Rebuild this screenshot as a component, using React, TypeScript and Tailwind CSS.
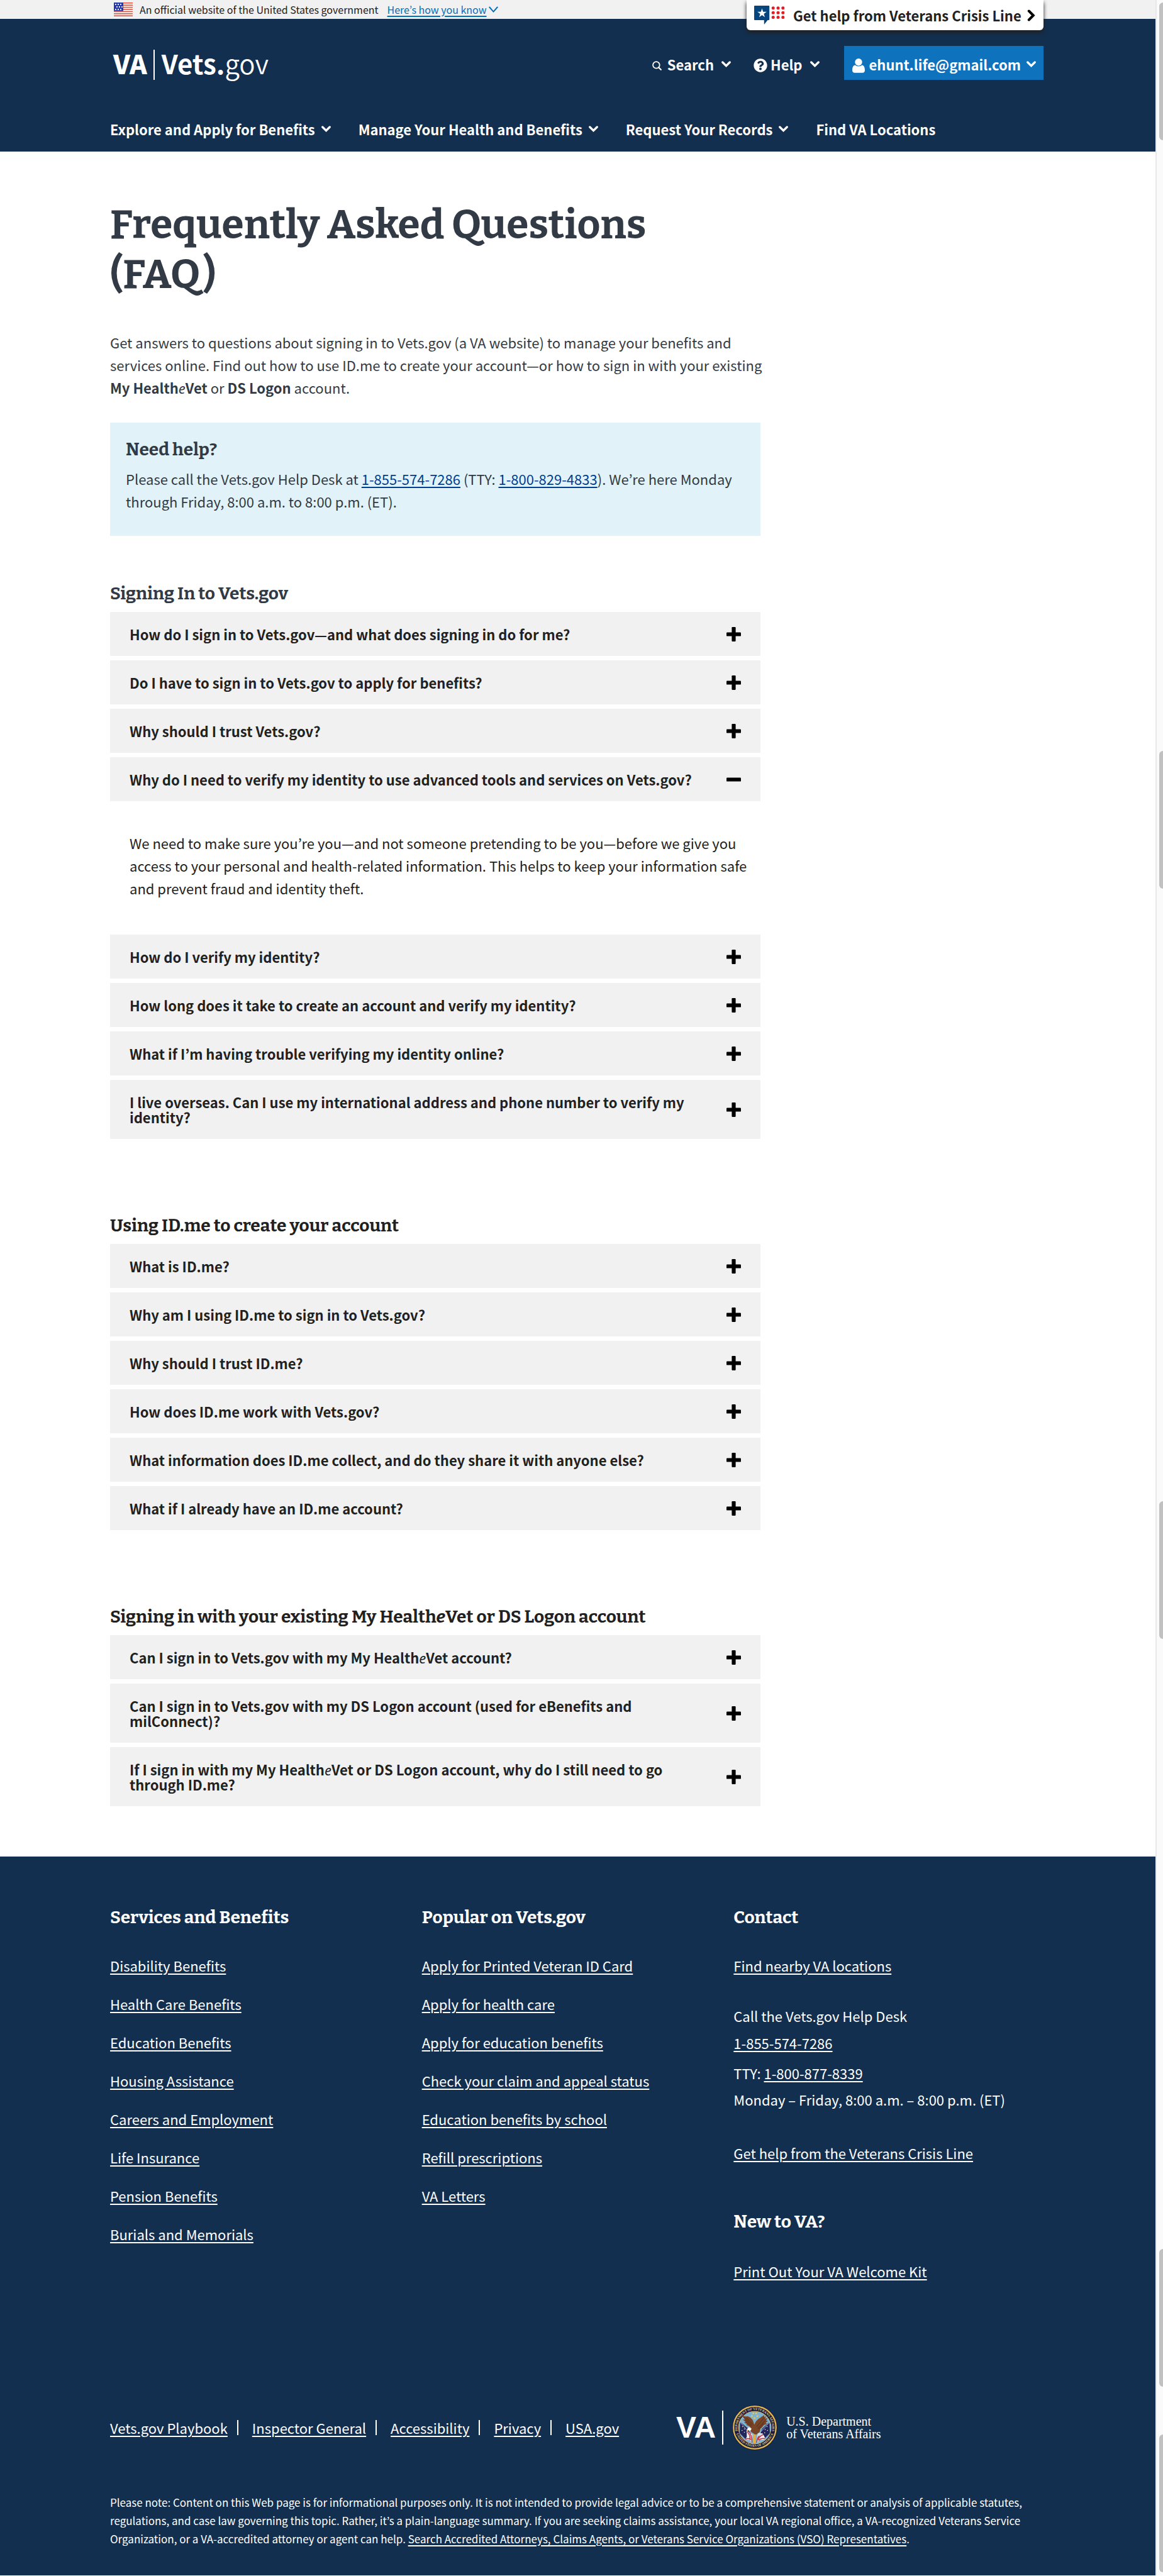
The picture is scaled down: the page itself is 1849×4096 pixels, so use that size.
import React, { useState } from "react";
import { FaQuestionCircle } from "react-icons/fa";

const SLAB = "font-['Bitter','DejaVu_Serif_Condensed',serif]";

function E({ light = false }: { light?: boolean }) {
  return <em className={light ? "font-['Noto_Sans',sans-serif] leading-4 font-normal italic" : "italic"}>e</em>;
}

function ChevronDown() {
  return (
    <svg className="h-[10px] w-[15px] shrink-0" viewBox="0 0 15 10" fill="none" stroke="currentColor" aria-hidden="true">
      <path d="M1.8 2L7.5 7.6L13.2 2" strokeWidth="3.4" strokeLinecap="round" />
    </svg>
  );
}

function PlusIcon({ open }: { open: boolean }) {
  return (
    <svg className="size-[23px] shrink-0" viewBox="0 0 23 23" fill="#000" aria-hidden="true">
      <rect x="0" y="8.4" width="23" height="6.2" rx="1.2" />
      {!open && <rect x="8.4" y="0" width="6.2" height="23" rx="1.2" />}
    </svg>
  );
}

function UsFlag() {
  const rows = [0, 2, 4, 6, 8, 10, 12];
  const stars: [number, number][] = [
    [3, 3], [7, 3], [11, 3], [5, 7], [9, 7], [13, 7], [3, 11], [7, 11], [11, 11],
  ];
  return (
    <svg className="h-[22px] w-[30px]" viewBox="0 0 30 22" aria-hidden="true">
      <rect width="30" height="22" fill="#fff" />
      {rows.map((r) => (
        <rect key={r} y={r * 1.7} width="30" height="1.6" fill="#e0503c" />
      ))}
      <rect width="15" height="13.6" fill="#2639ae" />
      {stars.map(([x, y]) => (
        <rect key={`${x}-${y}`} x={x - 1} y={y - 1} width="1.9" height="1.9" fill="#fff" />
      ))}
    </svg>
  );
}

function CrisisLogo() {
  const dots = [0, 1, 2];
  return (
    <svg className="h-[30px] w-[48px] shrink-0" viewBox="0 0 48 30" aria-hidden="true">
      <path d="M1 0H23.2a1 1 0 0 1 1 1V22a1 1 0 0 1-1 1H21.5L15.8 30V23H1a1 1 0 0 1-1-1V1A1 1 0 0 1 1 0Z" fill="#07457f" />
      <path d="M12.5 4.6L14.3 9.7H19.8L15.4 13L17 18.2L12.5 15.1L8 18.2L9.6 13L5.2 9.7H10.7Z" fill="#fff" />
      {dots.map((r) =>
        dots.map((c) => <circle key={`${r}${c}`} cx={30.2 + c * 7.8} cy={3.8 + r * 7.4} r="2.5" fill="#e31c25" />),
      )}
    </svg>
  );
}

function VaSeal() {
  const stars: [number, number][] = [[45, 18], [51, 18], [42, 23.5], [53.5, 24], [47.5, 28]];
  return (
    <svg className="size-[72px] shrink-0" viewBox="0 0 96 96" role="img" aria-label="Seal of the Department of Veterans Affairs">
      <defs>
        <path id="seal-top" d="M12.2 57A37 37 0 1 1 83.8 57" />
        <path id="seal-bottom" d="M8.5 60A41.5 41.5 0 0 0 87.5 60" />
        <clipPath id="seal-inner"><circle cx="48" cy="48" r="34" /></clipPath>
      </defs>
      <circle cx="48" cy="48" r="48" fill="#1a1c3d" />
      <circle cx="48" cy="48" r="45" fill="#191a3e" stroke="#e2b84f" strokeWidth="3" />
      <circle cx="48" cy="48" r="34.5" fill="#7fb2d0" stroke="#d3bd72" strokeWidth="1.2" />
      <g clipPath="url(#seal-inner)">
        <path d="M17 36L34 50L40 68L28 72L16 60Z" fill="#23265a" />
        <path d="M79 36L64 50L56 68L68 72L80 60Z" fill="#23265a" />
        <g fill="#fff">
          <circle cx="22" cy="46" r="1" /><circle cx="26" cy="51" r="1" /><circle cx="21" cy="54" r="1" />
          <circle cx="26" cy="58" r="1" /><circle cx="31" cy="56" r="1" /><circle cx="74" cy="46" r="1" />
          <circle cx="70" cy="52" r="1" /><circle cx="75" cy="54" r="1" /><circle cx="69" cy="59" r="1" />
        </g>
        <path d="M31 56L43 62L42 82L38 74L27 74L31 68Z" fill="#f3eeee" />
        <path d="M64 60L54 62L52 82L57 74L71 74L68 66Z" fill="#f3eeee" />
        <g stroke="#c2273a" strokeWidth="2" fill="none">
          <path d="M32 57Q38 62 38 73" /><path d="M36 57Q42 64 42 80" />
          <path d="M28 73Q35 69 40 74" /><path d="M66 63Q58 65 55 74" />
          <path d="M62 60Q54 66 52 80" /><path d="M70 72Q62 69 56 75" />
        </g>
        <path d="M16 35L38 62M80 36L56 62" stroke="#d9dce6" strokeWidth="1" />
        <path d="M44 62L50 62L49 84L45 84Z" fill="#e5b13c" />
      </g>
      <path d="M21 23Q28 25 33 24Q44 27 47 42Q50 32 60 27Q66 22 68 22L68 26L72 24L70 29L75 28L72 33L76 34L71 38L74 40L67 43Q63 49 60 50L58 58Q50 66 45 60Q39 58 38 52Q40 47 36 45L29 42L32 41L25 37L29 36L22 31L27 31Z" fill="#7a4426" />
      <path d="M26 27L42 44M30 27L44 42M27 33L40 46M68 27L52 46M70 33L54 50M67 39L56 52" stroke="#4b2817" strokeWidth="1.1" />
      <path d="M33 49Q37 46 41 50Q40 55 37 55L35 53L32 56Q31 51 33 49Z" fill="#fff" />
      <path d="M32 53L31 57L35 54Z" fill="#e9b53b" />
      <path d="M54 60Q60 57 64 62Q60 66 55 65Z" fill="#cfe0ea" />
      {stars.map(([x, y]) => (
        <path key={`${x}-${y}`} d={`M${x} ${y - 3}l.8 2h2.1l-1.7 1.3.7 2.1-1.9-1.3-1.9 1.3.7-2.1-1.7-1.3h2.1z`} fill="#f0cc4c" />
      ))}
      <text className="fill-[#e8d287] font-['Liberation_Serif',serif] text-[7px] font-bold">
        <textPath href="#seal-top" startOffset="50%" textAnchor="middle">DEPARTMENT OF VETERANS AFFAIRS</textPath>
      </text>
      <text className="fill-[#e8d287] font-['Liberation_Serif',serif] text-[7px] font-bold">
        <textPath href="#seal-bottom" startOffset="50%" textAnchor="middle">UNITED STATES OF AMERICA</textPath>
      </text>
    </svg>
  );
}

type Question = { q: React.ReactNode; a?: string };

const signingIn: Question[] = [
  { q: "How do I sign in to Vets.gov—and what does signing in do for me?" },
  { q: "Do I have to sign in to Vets.gov to apply for benefits?" },
  { q: "Why should I trust Vets.gov?" },
  {
    q: "Why do I need to verify my identity to use advanced tools and services on Vets.gov?",
    a: "We need to make sure you’re you—and not someone pretending to be you—before we give you access to your personal and health-related information. This helps to keep your information safe and prevent fraud and identity theft.",
  },
  { q: "How do I verify my identity?" },
  { q: "How long does it take to create an account and verify my identity?" },
  { q: "What if I’m having trouble verifying my identity online?" },
  { q: "I live overseas. Can I use my international address and phone number to verify my identity?" },
];

const usingIdMe: Question[] = [
  { q: "What is ID.me?" },
  { q: "Why am I using ID.me to sign in to Vets.gov?" },
  { q: "Why should I trust ID.me?" },
  { q: "How does ID.me work with Vets.gov?" },
  { q: "What information does ID.me collect, and do they share it with anyone else?" },
  { q: "What if I already have an ID.me account?" },
];

const existing: Question[] = [
  { q: <>Can I sign in to Vets.gov with my My Health<E light />Vet account?</> },
  { q: "Can I sign in to Vets.gov with my DS Logon account (used for eBenefits and milConnect)?" },
  { q: <>If I sign in with my My Health<E light />Vet or DS Logon account, why do I still need to go through ID.me?</> },
];

function AccordionItem({ item }: { item: Question }) {
  const [open, setOpen] = useState(Boolean(item.a));
  return (
    <li>
      <button
        type="button"
        aria-expanded={open}
        onClick={() => setOpen(!open)}
        className="flex w-full items-center justify-between gap-[31px] bg-[#f1f1f1] px-[31px] py-[23px] text-left text-[22px] leading-6 font-bold text-[#212121]"
      >
        <span>{item.q}</span>
        <PlusIcon open={open} />
      </button>
      {open && item.a && <p className="pt-12 pr-4 pb-[49px] pl-[31px]">{item.a}</p>}
    </li>
  );
}

function Accordion({ title, items }: { title: React.ReactNode; items: Question[] }) {
  return (
    <section>
      <h2 className={`${SLAB} text-[28px] leading-9 font-bold`}>{title}</h2>
      <ul className="mt-[11px] flex flex-col gap-[7px] text-[#212121]">
        {items.map((item, i) => (
          <AccordionItem key={i} item={item} />
        ))}
      </ul>
    </section>
  );
}

function Container({ children, className = "" }: { children: React.ReactNode; className?: string }) {
  return <div className={`mx-auto w-full max-w-[1487px] pr-[3px] ${className}`}>{children}</div>;
}

function FooterLink({ children }: { children: React.ReactNode }) {
  return <a href="#" className="underline decoration-2 underline-offset-[3px]">{children}</a>;
}

const services = [
  "Disability Benefits", "Health Care Benefits", "Education Benefits", "Housing Assistance",
  "Careers and Employment", "Life Insurance", "Pension Benefits", "Burials and Memorials",
];
const popular = [
  "Apply for Printed Veteran ID Card", "Apply for health care", "Apply for education benefits",
  "Check your claim and appeal status", "Education benefits by school", "Refill prescriptions", "VA Letters",
];
const legal = ["Vets.gov Playbook", "Inspector General", "Accessibility", "Privacy", "USA.gov"];
const menus = ["Explore and Apply for Benefits", "Manage Your Health and Benefits", "Request Your Records"];

function FooterList({ title, links }: { title: string; links: string[] }) {
  return (
    <div>
      <h2 className={`${SLAB} text-[28px] leading-9 font-bold`}>{title}</h2>
      <ul className="mt-10 flex flex-col gap-[25px]">
        {links.map((l) => (
          <li key={l}><FooterLink>{l}</FooterLink></li>
        ))}
      </ul>
    </div>
  );
}

function Banner() {
  return (
    <div className="bg-[#f1f1f1] text-base leading-[30px] text-[#212121]">
      <Container className="flex items-center">
        <div className="flex items-center gap-[11px] pl-[6px]">
          <UsFlag />
          <span>An official website of the United States government</span>
        </div>
        <button type="button" className="ml-[14px] flex items-center text-[#0071bc]">
          <span className="underline decoration-2 underline-offset-[3px]">Here’s how you know</span>
          <svg className="ml-[3px] h-[11px] w-[15px]" viewBox="0 0 15 11" fill="none" stroke="currentColor" aria-hidden="true">
            <path d="M1.3 1.5L7.5 8.6L13.7 1.5" strokeWidth="2" strokeLinecap="round" />
          </svg>
        </button>
      </Container>
    </div>
  );
}

function Header() {
  return (
    <header className="relative bg-[#132f4f] text-[22px] leading-9 font-bold text-white">
      <div className="absolute inset-x-0 -top-[30px]">
        <Container className="flex justify-end">
          <a
            href="#"
            className="flex h-12 w-[472px] items-center rounded-b-md bg-white pl-3 text-[#212121] shadow-[0_4px_6px_#212121]"
          >
            <CrisisLogo />
            <span className="ml-[14px]">Get help from Veterans Crisis Line</span>
            <svg className="ml-[9px] h-[19px] w-[13px]" viewBox="0 0 13 19" fill="none" stroke="#000" aria-hidden="true">
              <path d="M2.8 2.5L9.8 9.5L2.8 16.5" strokeWidth="4" strokeLinecap="round" />
            </svg>
          </a>
        </Container>
      </div>
      <Container className="pt-[43px]">
        <div className="flex h-[54px] items-center justify-between">
          <a href="#" className="flex items-center pl-[5px] text-[42px] leading-[54px]" aria-label="VA Vets.gov">
            <span className="font-black">VA</span>
            <span className="mt-[6px] ml-[10px] h-12 w-[2px] bg-white" />
            <span className="ml-[11px]">Vets.<span className="font-[350]">gov</span></span>
          </a>
          <div className="flex items-center">
            <button type="button" className="flex items-center pt-1">
              <svg className="mt-1 mr-[9px] size-[15px]" viewBox="0 0 15 15" fill="none" stroke="currentColor" aria-hidden="true">
                <circle cx="6.4" cy="6.4" r="5.3" strokeWidth="1.8" />
                <path d="M10.2 10.2L13.8 13.8" strokeWidth="2.2" strokeLinecap="round" />
              </svg>
              Search
              <span className="ml-3"><ChevronDown /></span>
            </button>
            <button type="button" className="ml-9 flex items-center pt-1">
              <FaQuestionCircle className="mt-1 mr-[5px] size-[22px]" />
              Help
              <span className="ml-3"><ChevronDown /></span>
            </button>
            <button type="button" className="ml-[39px] flex h-[54px] items-center bg-[#0f72bc] pt-1 pr-3 pl-[13px]">
              <svg className="mt-1 mr-[7px] h-[23px] w-5" viewBox="0 0 20 23" fill="currentColor" aria-hidden="true">
                <circle cx="10" cy="5.7" r="5.7" />
                <path d="M4.6 10.4C1.5 10.8 0 14 0 18.8c0 2.4 1.5 4 3.8 4h12.4c2.3 0 3.8-1.6 3.8-4 0-4.8-1.5-8-4.6-8.4-1.3 1.3-3.2 2-5.4 2s-4.1-.7-5.4-2z" />
              </svg>
              ehunt.life@gmail.com
              <span className="ml-[9px]"><ChevronDown /></span>
            </button>
          </div>
        </div>
        <nav className="mt-[41px] flex h-[73px] items-center gap-[44px]">
          {menus.map((m) => (
            <button key={m} type="button" className="flex items-center gap-[10px]">
              {m}
              <ChevronDown />
            </button>
          ))}
          <a href="#">Find VA Locations</a>
        </nav>
      </Container>
    </header>
  );
}

function Footer() {
  return (
    <footer className="bg-[#132f4f] pt-[79px] pb-[44px] text-[22px] leading-9 text-white">
      <Container>
        <div className="-mr-[3px] grid grid-cols-3">
          <FooterList title="Services and Benefits" links={services} />
          <FooterList title="Popular on Vets.gov" links={popular} />
          <div>
            <h2 className={`${SLAB} text-[28px] leading-9 font-bold`}>Contact</h2>
            <p className="mt-10"><FooterLink>Find nearby VA locations</FooterLink></p>
            <p className="mt-11">Call the Vets.gov Help Desk</p>
            <p className="mt-[7px]"><FooterLink>1-855-574-7286</FooterLink></p>
            <p className="mt-3">TTY: <FooterLink>1-800-877-8339</FooterLink></p>
            <p className="mt-[6px]">Monday – Friday, 8:00 a.m. – 8:00 p.m. (ET)</p>
            <p className="mt-[49px]"><FooterLink>Get help from the Veterans Crisis Line</FooterLink></p>
            <h2 className={`${SLAB} mt-[74px] text-[28px] leading-9 font-bold`}>New to VA?</h2>
            <p className="mt-[42px]"><FooterLink>Print Out Your VA Welcome Kit</FooterLink></p>
          </div>
        </div>
        <div className="mt-[195px] flex h-[72px] items-center">
          <ul className="flex w-[900px] items-center">
            {legal.map((l, i) => (
              <li key={l} className="flex items-center">
                {i > 0 && <span className="mr-[22px] ml-[15px] h-6 w-[2px] bg-white" />}
                <FooterLink>{l}</FooterLink>
              </li>
            ))}
          </ul>
          <a href="#" className="flex items-center" aria-label="U.S. Department of Veterans Affairs">
            <span className="font-['Liberation_Sans',sans-serif] text-[48px] leading-[54px] font-bold">VA</span>
            <span className="ml-[10px] h-[54px] w-[2px] bg-white" />
            <span className="ml-[14px]"><VaSeal /></span>
            <span className="ml-[14px] font-['Liberation_Serif',serif] text-[20px] leading-5">
              U.S. Department<br />of Veterans Affairs
            </span>
          </a>
        </div>
        <p className="mt-[68px] text-[17px] leading-[29px]">
          Please note: Content on this Web page is for informational purposes only. It is not intended to provide legal
          advice or to be a comprehensive statement or analysis of applicable statutes, regulations, and case law
          governing this topic. Rather, it’s a plain-language summary. If you are seeking claims assistance, your local
          VA regional office, a VA-recognized Veterans Service Organization, or a VA-accredited attorney or agent can
          help. <FooterLink>Search Accredited Attorneys, Claims Agents, or Veterans Service Organizations (VSO) Representatives</FooterLink>.
        </p>
      </Container>
    </footer>
  );
}

function ScrollTrack() {
  const thumb = "h-[219px] rounded-l-md bg-[#c1c1c1]";
  return (
    <div className="w-3 shrink-0 border-l-2 border-[#e8e8e8] bg-[#fafafa] pt-1 pl-1" aria-hidden="true">
      <div className={thumb} />
      <div className={`${thumb} mt-[971px]`} />
      <div className={`${thumb} mt-[974px]`} />
      <div className={`${thumb} mt-[970px]`} />
      <div className={`${thumb} mt-[76px]`} />
    </div>
  );
}

export default function App() {
  return (
    <div className="flex bg-white font-['Noto_Sans_CJK_JP',sans-serif]">
      <div className="min-w-0 flex-1">
        <Banner />
        <Header />
        <main className="pt-[77px] pb-[80px] text-[22px] leading-9 text-[#323a45]">
          <Container>
            <div className="w-full max-w-[1034px]">
              <h1 className={`${SLAB} max-w-[960px] text-[64px] leading-[79px] font-bold`}>
                Frequently Asked Questions (FAQ)
              </h1>
              <p className="-mr-2 mt-[50px]">
                Get answers to questions about signing in to Vets.gov (a VA website) to manage your benefits and
                services online. Find out how to use ID.me to create your account—or how to sign in with your existing{" "}
                <strong>My Health<E light />Vet</strong> or <strong>DS Logon</strong> account.
              </p>
              <div className="mt-[38px] bg-[#e1f3f8] px-[25px] pt-[25px] pb-[37px]">
                <h2 className={`${SLAB} text-[28px] leading-9 font-bold`}>Need help?</h2>
                <p className="mt-[10px]">
                  Please call the Vets.gov Help Desk at{" "}
                  <a href="#" className="text-[#003e91] underline decoration-2 underline-offset-[3px]">1-855-574-7286</a> (TTY:{" "}
                  <a href="#" className="text-[#003e91] underline decoration-2 underline-offset-[3px]">1-800-829-4833</a>). We’re
                  here Monday through Friday, 8:00 a.m. to 8:00 p.m. (ET).
                </p>
              </div>
              <div className="mt-[74px] flex flex-col gap-[120px]">
                <Accordion title="Signing In to Vets.gov" items={signingIn} />
                <div className="text-[#212121]">
                  <Accordion title="Using ID.me to create your account" items={usingIdMe} />
                </div>
                <div className="text-[#212121]">
                  <Accordion title={<>Signing in with your existing My Health<E />Vet or DS Logon account</>} items={existing} />
                </div>
              </div>
            </div>
          </Container>
        </main>
        <Footer />
      </div>
      <ScrollTrack />
    </div>
  );
}
